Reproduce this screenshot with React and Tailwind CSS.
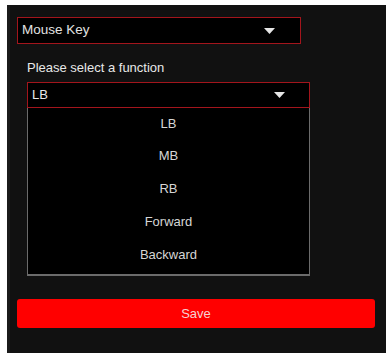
import React from "react";

function Caret() {
  return (
    <svg width="11" height="6" viewBox="0 0 11 6" className="block">
      <path d="M0 0 L11 0 L5.5 6 Z" fill="#e6e6e6" />
    </svg>
  );
}

export default function App() {
  const items = ["LB", "MB", "RB", "Forward", "Backward"];
  return (
    <div
      className="w-[390px] h-[359px] bg-white overflow-hidden"
      style={{ fontFamily: '"Liberation Sans", Arial, sans-serif' }}
    >
      <div className="ml-[7px] mt-[5px] w-[379px] h-[348px] bg-[#111111] border-l-[3px] border-[#1b1b1b] flex flex-col">
        <div className="ml-[7px] mt-[12px] w-[284px] h-[27px] bg-black border border-[#a3151c] flex items-center justify-between pl-[4px] pr-[25px]">
          <span className="text-[13.5px] text-[#e2e2e2]">Mouse Key</span>
          <Caret />
        </div>
        <div className="ml-[17px] mt-[16px] flex flex-col w-[283px]">
          <div className="text-[13px] text-[#e8e8e8] leading-[16px]">Please select a function</div>
          <div className="mt-[6px] h-[26px] bg-black border border-[#a3151c] flex items-center justify-between pl-[4px] pr-[24px]">
            <span className="text-[13px] text-[#e8e8e8]">LB</span>
            <Caret />
          </div>
          <div className="bg-black border-x border-b-2 border-[#6b6b6b] flex flex-col pb-[3px]">
            {items.map((t, i) => (
              <div
                key={t}
                className={`${i === 0 ? "h-[31px]" : "h-[33px]"} flex items-center justify-center text-[13px] text-[#d6d6d6]`}
              >
                {t}
              </div>
            ))}
          </div>
        </div>
        <button className="ml-[7px] mt-[23px] w-[358px] h-[29px] bg-[#ff0000] rounded-[3px] text-[13px] text-[#f6d2d2] flex items-center justify-center">
          Save
        </button>
      </div>
    </div>
  );
}
